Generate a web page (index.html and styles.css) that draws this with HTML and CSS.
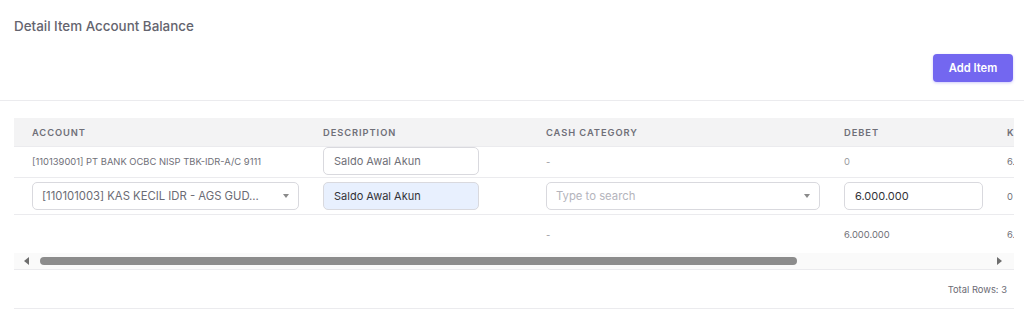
FILE: index.html
```html
<!DOCTYPE html>
<html>
<head>
<meta charset="utf-8">
<link rel="stylesheet" href="styles.css">
</head>
<body>
<div class="card">
  <div class="card-header">
    <h4 class="title">Detail Item Account Balance</h4>
    <div class="actions"><button class="btn-primary">Add Item</button></div>
  </div>
  <div class="card-body">
    <div class="table-wrap">
      <table class="grid">
        <colgroup>
          <col class="c1"><col class="c2"><col class="c3"><col class="c4"><col class="c5"><col class="c6">
        </colgroup>
        <thead>
          <tr><th>Account</th><th>Description</th><th>Cash Category</th><th>Debet</th><th>Kredit</th><th></th></tr>
        </thead>
        <tbody>
          <tr class="r1">
            <td class="small">[110139001] PT BANK OCBC NISP TBK-IDR-A/C 9111</td>
            <td><div class="input muted">Saldo Awal Akun</div></td>
            <td class="small light">-</td>
            <td class="small light">0</td>
            <td class="small">6.000.000</td>
            <td></td>
          </tr>
          <tr class="r2">
            <td><div class="input select"><span>[110101003] KAS KECIL IDR - AGS GUD...</span><i class="caret"></i></div></td>
            <td><div class="input filled">Saldo Awal Akun</div></td>
            <td><div class="input select"><span class="ph">Type to search</span><i class="caret"></i></div></td>
            <td><div class="input">6.000.000</div></td>
            <td class="small">0</td>
            <td></td>
          </tr>
          <tr class="r3">
            <td></td>
            <td></td>
            <td class="small light">-</td>
            <td class="small">6.000.000</td>
            <td class="small">6.000.000</td>
            <td></td>
          </tr>
        </tbody>
      </table>
    </div>
    <div class="hscroll">
      <i class="arrow left"></i>
      <div class="track"><div class="thumb"></div></div>
      <i class="arrow right"></i>
    </div>
    <div class="footer">Total Rows: 3</div>
  </div>
</div>
</body>
</html>
```

FILE: styles.css
```css
html, body {
  margin: 0;
  padding: 0;
  background: #ffffff;
  font-family: Inter, "Noto Sans", "Liberation Sans", sans-serif;
  color: #6b6b74;
}

.card-header {
  padding: 17px 11px 18px 14px;
  border-bottom: 1px solid #ebebee;
  display: flex;
  flex-direction: column;
}

.title {
  margin: 0;
  font-size: 13.4px;
  line-height: 19px;
  font-weight: 500;
  color: #64646e;
}

.actions {
  display: flex;
  justify-content: flex-end;
  margin-top: 18px;
}

.btn-primary {
  height: 28px;
  width: 80px;
  border: none;
  border-radius: 4px;
  background: #7367f0;
  color: #ffffff;
  font-family: inherit;
  font-size: 11.2px;
  font-weight: 600;
  box-shadow: 0 1px 3px rgba(115, 103, 240, 0.35);
}

.card-body {
  padding: 17px 10px 0 14px;
}

.table-wrap {
  width: 1000px;
  overflow: hidden;
}

.grid {
  width: 1300px;
  table-layout: fixed;
  border-collapse: collapse;
}

.c1 { width: 291px; }
.c2 { width: 223px; }
.c3 { width: 298px; }
.c4 { width: 163px; }
.c5 { width: 163px; }
.c6 { width: 162px; }

.grid th, .grid td {
  padding: 0 6px 0 18px;
  text-align: left;
  white-space: nowrap;
  overflow: hidden;
}

.grid th {
  height: 28px;
  background: #f3f3f4;
  border-bottom: 1px solid #ebebee;
  font-size: 9.3px;
  font-weight: 600;
  letter-spacing: 0.95px;
  text-transform: uppercase;
  color: #6f6f78;
}

.grid td {
  border-bottom: 1px solid #ebebee;
  vertical-align: middle;
}

.r1 td { height: 29px; vertical-align: top; }
.r1 td.small { vertical-align: middle; padding-bottom: 1px; }
.r2 td { height: 36px; }
.r3 td { height: 38px; border-bottom: none; }

.small {
  font-size: 9.4px;
  color: #707078;
}

.small.light { color: #9a9aa0; }

.input {
  box-sizing: border-box;
  height: 28px;
  border: 1px solid #d9d9de;
  border-radius: 5px;
  padding: 0 10px;
  font-size: 11px;
  line-height: 26px;
  color: #333338;
  background: #ffffff;
  white-space: nowrap;
  overflow: hidden;
}

.r1 .input, .r2 td:nth-child(2) .input { width: 156px; }
.r2 td:nth-child(4) .input { width: 139px; }

.input.muted { color: #707078; }
.input.filled { background: #e8f0fe; }

.select {
  display: flex;
  align-items: center;
  justify-content: space-between;
  color: #6b6b74;
  padding-left: 9px;
  padding-right: 9px;
  font-size: 11.3px;
}

.ph { color: #b4b4bc; }

.caret {
  width: 0;
  height: 0;
  border-left: 3.5px solid transparent;
  border-right: 3.5px solid transparent;
  border-top: 4px solid #8a8a8a;
}

.hscroll {
  width: 1000px;
  height: 16px;
  background: #fafafa;
  border-bottom: 1px solid #ebebee;
  display: flex;
  align-items: center;
}

.arrow {
  width: 0;
  height: 0;
  border-top: 4.5px solid transparent;
  border-bottom: 4.5px solid transparent;
}

.arrow.left {
  border-right: 5px solid #6e6e6e;
  margin-left: 10px;
}

.arrow.right {
  border-left: 5px solid #6e6e6e;
  margin-right: 12px;
}

.track {
  flex: 1;
  height: 8px;
  margin: 0 10px 0 11px;
}

.thumb {
  width: 757px;
  height: 8px;
  border-radius: 4px;
  background: #8c8c8c;
}

.footer {
  width: 1000px;
  box-sizing: border-box;
  height: 39px;
  padding-right: 7px;
  display: flex;
  align-items: center;
  justify-content: flex-end;
  font-size: 9.4px;
  color: #6b6b74;
  border-bottom: 1px solid #ebebee;
}
```
